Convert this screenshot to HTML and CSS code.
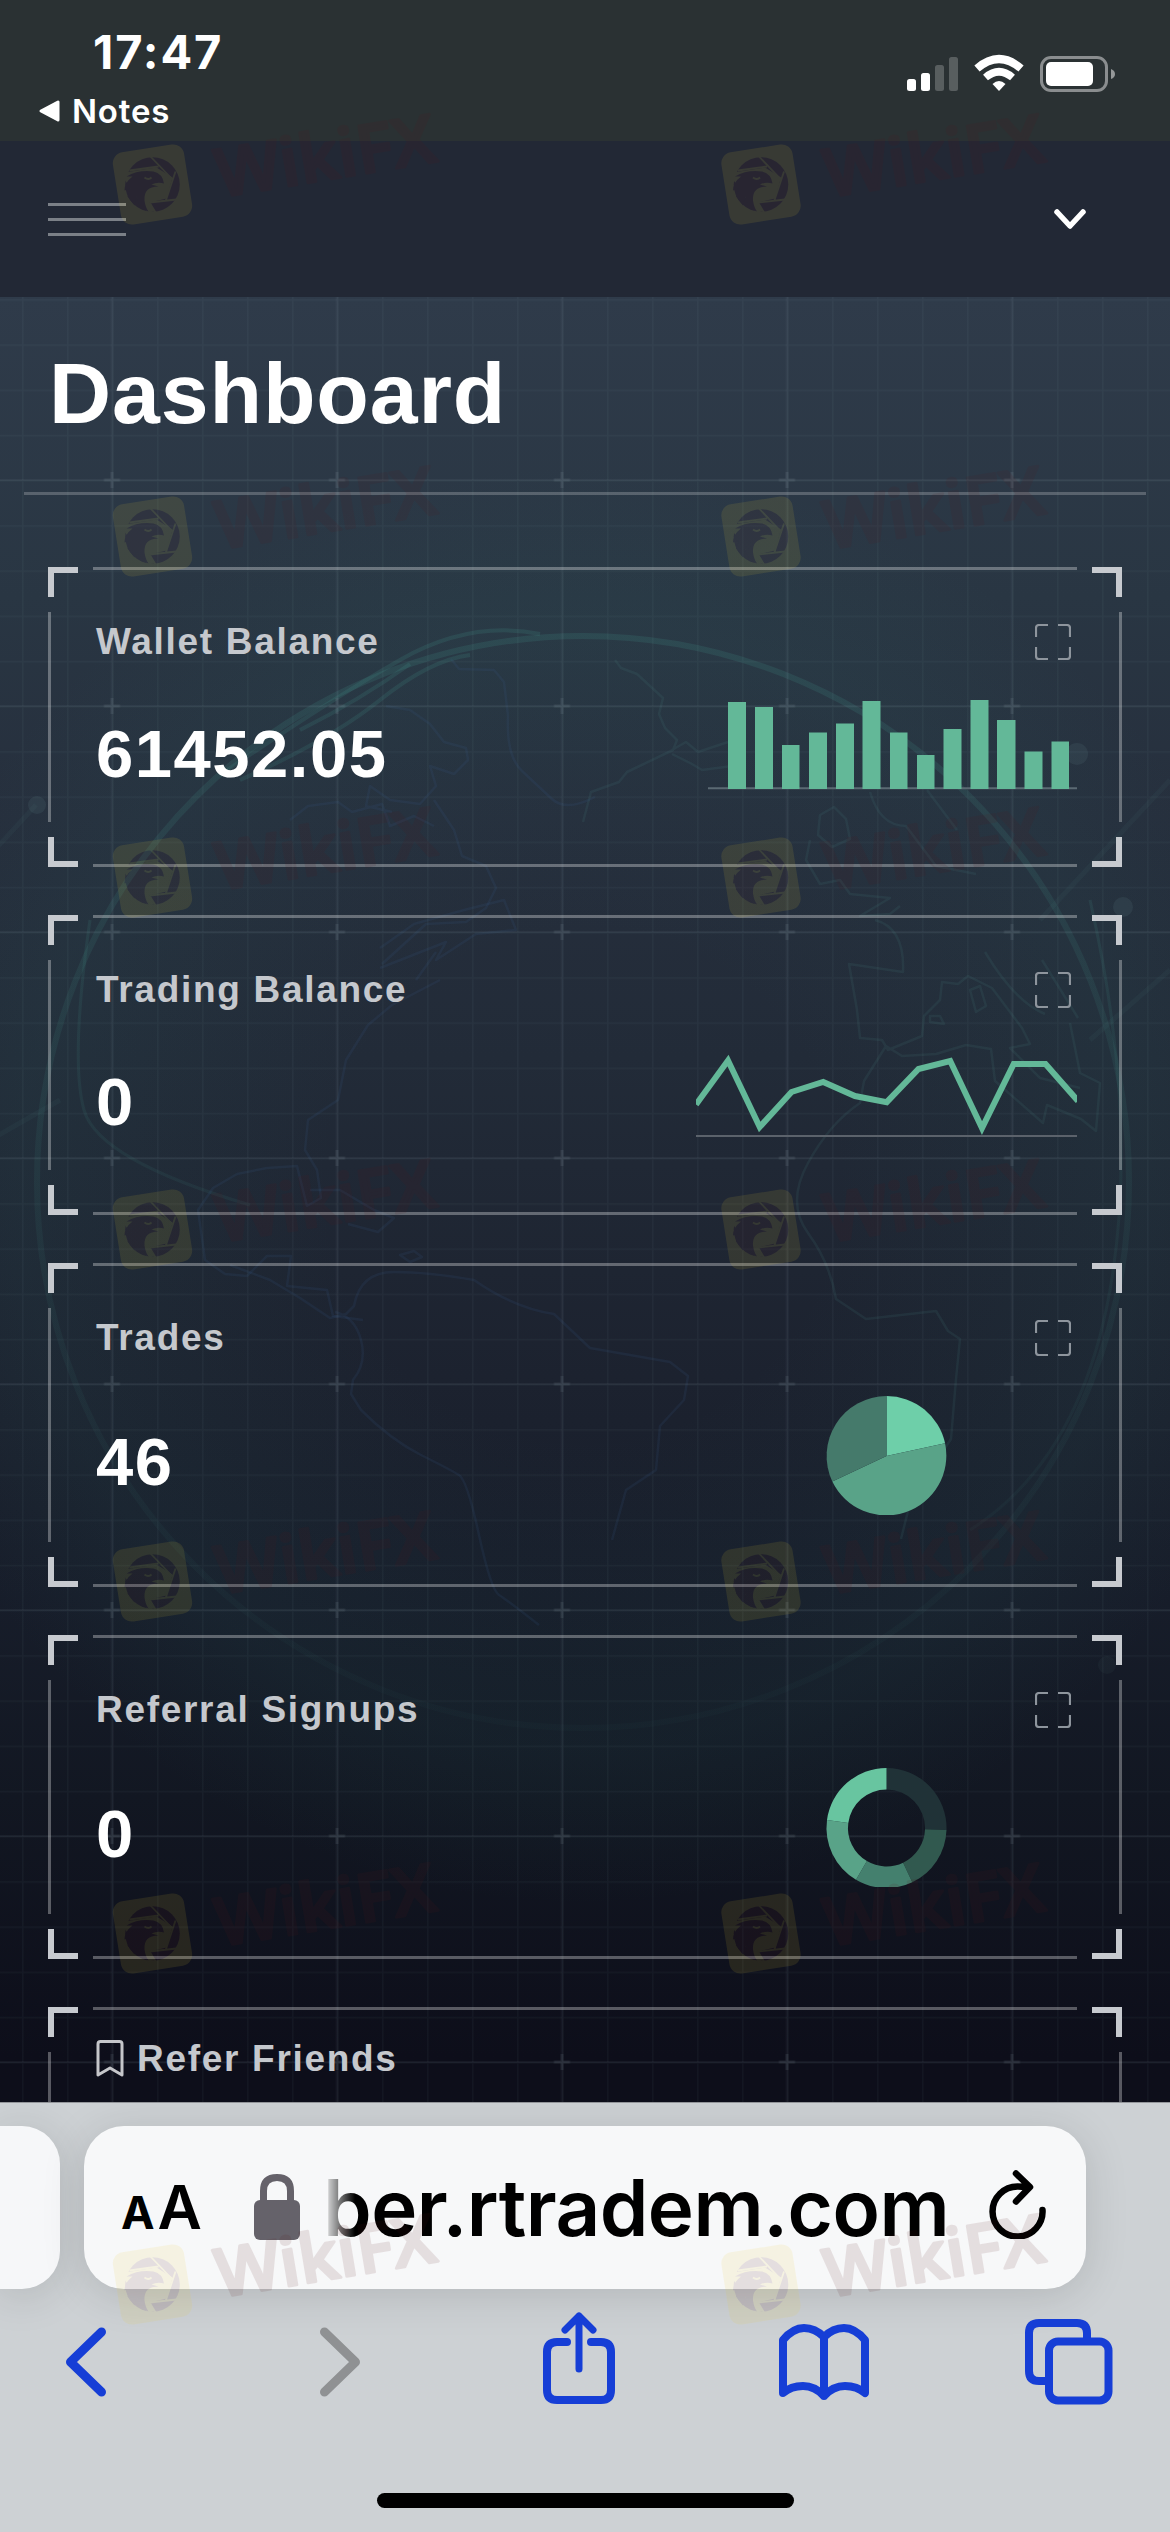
FILE: index.html
```html
<!DOCTYPE html>
<html lang="en">
<head>
<meta charset="utf-8">
<title>Dashboard</title>
<link rel="stylesheet" href="styles.css">
</head>
<body>

<div class="status">
  <div class="status-left">
    <div class="time">17:47</div>
    <div class="back-app"><svg width="22" height="24" viewBox="0 0 22 24"><path d="M3 12L20 3v18z" fill="#fff" stroke="#fff" stroke-width="3" stroke-linejoin="round"/></svg><span>Notes</span></div>
  </div>
  <svg class="status-icons" width="212" height="40" viewBox="905 54 212 40">
    <g fill="#fff">
      <rect x="907" y="79" width="9" height="12" rx="2.5"/>
      <rect x="921" y="73" width="9" height="18" rx="2.5"/>
      <rect x="935" y="65" width="9" height="26" rx="2.5" opacity=".22"/>
      <rect x="949" y="57" width="9" height="34" rx="2.5" opacity=".22"/>
      <path d="M999 91l-6.5-7q6.500-6 13 0z"/>
      <rect x="1046" y="62" width="47" height="24" rx="5"/>
      <path d="M1111 69q4 1.500 4 5t-4 5z" opacity=".5"/>
    </g>
    <g fill="none" stroke="#fff">
      <path d="M977 68.500Q999 49.500 1021 68.500" stroke-width="8"/>
      <path d="M985.500 77.500Q999 66 1012.500 77.500" stroke-width="7.500"/>
      <rect x="1041.500" y="57.500" width="65" height="33" rx="9.500" stroke-width="3" opacity=".45"/>
    </g>
  </svg>
</div>

<div class="navbar">
  <div class="menu"><i></i><i></i><i></i></div>
  <svg width="34" height="22" viewBox="0 0 34 22"><path d="M4 4l13 14L30 4" fill="none" stroke="#fff" stroke-width="5.500" stroke-linecap="round" stroke-linejoin="round"/></svg>
</div>

<div class="page">
  <svg class="backdrop" width="1170" height="1805" viewBox="0 297 1170 1805">
    <defs>
      <pattern id="minor" x="22" y="480" width="45" height="45.200" patternUnits="userSpaceOnUse">
        <path d="M.5 0v45.200M0 .5h45" stroke="#9fc0d0" stroke-opacity=".045" stroke-width="2" fill="none"/>
      </pattern>
      <pattern id="major" x="-.5" y="367" width="225" height="226" patternUnits="userSpaceOnUse">
        <path d="M112.500 0v226M0 113h225" stroke="#a9c0cc" stroke-opacity=".065" stroke-width="2" fill="none"/>
        <path d="M112.500 105v16M104.500 113h16" stroke="#a9c0cc" stroke-opacity=".11" stroke-width="3" fill="none"/>
      </pattern>
      <radialGradient id="glow" gradientUnits="userSpaceOnUse" cx="583" cy="1185" r="720">
        <stop offset=".35" stop-color="#2f6d6a" stop-opacity="0"/>
        <stop offset=".78" stop-color="#2f6d6a" stop-opacity=".09"/>
        <stop offset="1" stop-color="#2f6d6a" stop-opacity="0"/>
      </radialGradient>
      <linearGradient id="fade" gradientUnits="userSpaceOnUse" x1="0" y1="630" x2="0" y2="1740">
        <stop offset="0" stop-color="#3f8f86" stop-opacity=".19"/>
        <stop offset=".5" stop-color="#3f8f86" stop-opacity=".1"/>
        <stop offset="1" stop-color="#3f8f86" stop-opacity=".03"/>
      </linearGradient>
    </defs>
    <circle cx="583" cy="1185" r="720" fill="url(#glow)"/>
    <g fill="none" stroke="url(#fade)">
      <circle cx="583" cy="1182" r="546" stroke-width="6"/>
      <path d="M90 920Q70 1060 84 1110T250 1205M1090 900Q1140 1120 1110 1290T970 1530" stroke-width="3"/>
      <path d="M220 775Q330 700 400 660T540 634M240 780Q330 740 380 700T470 655M300 730q60-30 110-66" stroke-width="4"/>
    </g>
    <!-- coastlines -->
    <g fill="none" stroke="#3a5f8f" stroke-opacity=".14" stroke-width="2.500" stroke-linejoin="round">
      <path d="M451 659l8 10 35 1 10 12 4 34q-2 40 14 55t30 28 43-2"/>
      <path d="M386 706l24 4 20 14 14 18 22 6 2 12-14 14-24-8 6 20-16 18-30-4-20-14-4 20 26 6M290 820l18-14 30-4 14 10 30-8 8 22 24-10 20 10M434 800l20 30 8 26 24 10 10 22-10 20-20 14-40 2-44 40"/>
      <path d="M380 948l34-24 50-14 40-10 12 30-40 4-40 26 10-18-66 26M416 980l20-28M440 980l-48 25-24 20-22 35-8 40-30 20-3 30 12 20 4 28-14 8-10-40-30 2-30 6-24 14-15 22 7 50 20 14 22 2 20-20 24 0-4 30 40 4 6 26 30 4"/>
      <path d="M230 1265l40 15 30 18 30 20 16-4 8-8q6-34 40-34t80 8q40 28 80 34l36 34 80 14 18 14-4 24-24 26-4 44-30 20-14 50M335 1312q20 5 26 28t-8 40l-2 14 10 16q30 30 60 45t38 20 20 60 20 60 40 30"/>
      <path d="M310 1190h30l34 20 20 8-16 14-30-8M400 1255l14-4 8 6-12 5z"/>
    </g>
    <g fill="none" stroke="#46817f" stroke-opacity=".14" stroke-width="2.500" stroke-linejoin="round">
      <path d="M615 660l6 8 16 6 26 24-4 16 6 14 12 12-4 10-46 22-8 10-28 10-8 30M672 750l14-8 12 10 30-10M672 754l20 10 10 6 30-4M820 815l14-8 12 12 4 20-18 8-14-12zM810 840l-4 20 14 24 20-4 10 14 40 4-30 18 30-2 10-8"/>
      <path d="M870 792q10 34 36 34l30 40 40 8M927 790l30 40M875 920q30 8 28 52l-54-8 8 46 3 28 22 2 6 10 34-14 2-20 16-16 2-18 16 2 10-8 24 12 30 40 8 16-20 4 30 30 40 10M886 1046l16 10 34-2 30-9 25 4 4 32 48 42 4-18 34 14 15 12 4-48-20-10-10-50M886 1046l-22 35-4 22q-30 20-52 60t0 70 28 66l30 20 70-8 12 20 12 8-4 40-5 60-40 60-10 40"/>
      <path d="M985 952q30 50 60 62M1042 960l36 58M930 1016l10 0 4 8-14-2zM970 990l10-4 6 20-10 6z"/>
    </g>
    <g stroke="#5c8a8f" stroke-opacity=".07" stroke-width="5" fill="#5c7a80" fill-opacity=".16">
      <path d="M-10 855l46-50M1170 780l-130 140M1170 970l-80 70M-10 1140l70-40"/>
      <circle cx="37" cy="805" r="9" stroke="none"/>
      <circle cx="1077" cy="754" r="11" stroke="none"/>
      <circle cx="1123" cy="907" r="10" stroke="none"/>
      <circle cx="1107" cy="1665" r="9" stroke="none" opacity=".5"/>
    </g>
    <rect y="297" width="1170" height="1805" fill="url(#minor)"/>
    <rect y="297" width="1170" height="1805" fill="url(#major)"/>
  </svg>

  <h1>Dashboard</h1>
  <div class="rule"></div>

  <div class="cards">
    <div class="card">
      <div class="card-head"><span>Wallet Balance</span><svg class="expand" width="36" height="36" viewBox="0 0 36 36"><path d="M1 13V4q0-3 3-3h9M23 1h9q3 0 3 3v9M35 23v9q0 3-3 3h-9M13 35H4q-3 0-3-3v-9"/></svg></div>
      <div class="card-body">
        <div class="value">61452.05</div>
        <svg class="chart" width="381" height="90" viewBox="696 700 381 90">
          <path d="M708 788.200h369" stroke="#5b6a73" stroke-width="2"/>
          <path fill="#63b898" d="M728 702h18v87h-18zM755 707h18v82h-18zM782 745h17.500v44H782zM809 732.500h18V789h-18zM836 723.500h18V789h-18zM862.500 701h18v88h-18zM890 732.500h17.500V789H890zM917 755h17.500v34H917zM943.500 729h18v60h-18zM970.500 700h18v89h-18zM997 720h18.500v69H997zM1024.500 751.500h18V789h-18zM1051.500 741.500h17.500V789h-17.500z"/>
        </svg>
      </div>
    </div>

    <div class="card">
      <div class="card-head"><span>Trading Balance</span><svg class="expand" width="36" height="36" viewBox="0 0 36 36"><path d="M1 13V4q0-3 3-3h9M23 1h9q3 0 3 3v9M35 23v9q0 3-3 3h-9M13 35H4q-3 0-3-3v-9"/></svg></div>
      <div class="card-body">
        <div class="value">0</div>
        <svg class="chart" width="381" height="90" viewBox="696 1048 381 90">
          <path d="M696 1136h381" stroke="#5b626b" stroke-width="2"/>
          <path fill="none" stroke="#63b898" stroke-width="6" d="M696 1104.500l32-44 31.700 66.500 31.800-35 31.700-10 31.800 14 31.700 6.200 31.800-33.200 31.700-8 31.800 67 31.700-64h31.800l32.500 37"/>
        </svg>
      </div>
    </div>

    <div class="card tall">
      <div class="card-head"><span>Trades</span><svg class="expand" width="36" height="36" viewBox="0 0 36 36"><path d="M1 13V4q0-3 3-3h9M23 1h9q3 0 3 3v9M35 23v9q0 3-3 3h-9M13 35H4q-3 0-3-3v-9"/></svg></div>
      <div class="card-body">
        <div class="value">46</div>
        <svg class="chart" width="381" height="120" viewBox="-190.500 -61 381 120">
          <path d="M0 0V-60A60 60 0 0 1 58.600-12.700z" fill="#6ecfa9"/>
          <path d="M0 0L58.600-12.700A60 60 0 0 1-54.200 25.500z" fill="#59a388"/>
          <path d="M0 0L-54.200 25.500A60 60 0 0 1 0-60z" fill="#457a6b"/>
        </svg>
      </div>
    </div>

    <div class="card tall">
      <div class="card-head"><span>Referral Signups</span><svg class="expand" width="36" height="36" viewBox="0 0 36 36"><path d="M1 13V4q0-3 3-3h9M23 1h9q3 0 3 3v9M35 23v9q0 3-3 3h-9M13 35H4q-3 0-3-3v-9"/></svg></div>
      <div class="card-body">
        <div class="value">0</div>
        <svg class="chart" width="381" height="120" viewBox="-190.500 -61 381 120">
          <path d="M0-60A60 60 0 0 1 60 2L38.500 1.300A38.500 38.500 0 0 0 0-38.500z" fill="#203237"/>
          <path d="M60 2A60 60 0 0 1 25.800 54.200L16.600 34.700A38.500 38.500 0 0 0 38.500 1.300z" fill="#31594f"/>
          <path d="M25.800 54.200A60 60 0 0 1-30.500 51.700L-19.600 33.100A38.500 38.500 0 0 0 16.600 34.700z" fill="#44806e"/>
          <path d="M-30.500 51.700A60 60 0 0 1-59.500-8L-38.200-5.100A38.500 38.500 0 0 0-19.600 33.100z" fill="#59a388"/>
          <path d="M-59.500-8A60 60 0 0 1 0-60V-38.500A38.500 38.500 0 0 0-38.200-5.100z" fill="#68c5a0"/>
        </svg>
      </div>
    </div>

    <div class="card refer">
      <div class="card-head"><svg class="bookmark" width="28" height="38" viewBox="0 0 28 38"><path d="M2 4q0-2.500 2.500-2.500h19Q26 1.500 26 4v31l-12-7-12 7z"/></svg><span>Refer Friends</span></div>
    </div>
  </div>
</div>

<div class="browser">
  <div class="tabs">
    <div class="tab-prev"></div>
    <div class="address">
      <div class="text-size"><small>A</small><b>A</b></div>
      <svg class="lock" width="46" height="66" viewBox="0 0 46 66"><rect y="26" width="46" height="40" rx="6" fill="#65626a"/><path d="M9.500 28V17Q9.500 3.500 23 3.500T36.500 17v11" fill="none" stroke="#65626a" stroke-width="7"/></svg>
      <div class="url">ber.rtradem.com</div>
      <svg class="reload" width="58" height="70" viewBox="0 0 58 70"><path d="M38 18.500Q34 17.500 30 17.500A25 25 0 1 0 54.500 41M28 4.500l14 13.500-14 14.500" fill="none" stroke="#000" stroke-width="6.500" stroke-linecap="round" stroke-linejoin="round"/></svg>
    </div>
  </div>

  <div class="toolbar">
    <svg width="42" height="70" viewBox="0 0 42 70"><path d="M36.500 5L5.500 35l31 30" stroke="#163ed6"/></svg>
    <svg class="forward" width="42" height="70" viewBox="0 0 42 70"><path d="M5.500 5l31 30-31 30" stroke="#8f9193"/></svg>
    <svg class="thin share" width="74" height="92" viewBox="0 0 74 92"><path d="M25 30H15Q5 30 5 40v38q0 10 10 10h44q10 0 10-10V40q0-10-10-10H49" stroke-linecap="butt"/><path class="arrow" d="M37 57V4M23 18L37 4l14 14"/></svg>
    <svg class="thin book" width="90" height="76" viewBox="0 0 90 76"><path d="M45 72V13Q36 4 25 4T4 16v53q8-7 20-7t21 10q9-10 21-10t20 7V16Q76 4 65 4T45 13"/></svg>
    <svg class="thin pages" width="88" height="86" viewBox="0 0 88 86"><path d="M21 62h-7q-10 0-10-10V14Q4 4 14 4h38q10 0 10 10v8"/><rect x="24" y="22.500" width="59.500" height="59" rx="9"/></svg>
  </div>

  <div class="home"></div>
</div>

<svg class="watermark" width="1170" height="2532" viewBox="0 0 1170 2532">
  <defs>
    <g id="mark" opacity=".11">
      <rect x="-36" y="-36.500" width="72" height="73" rx="11" fill="#e9cb34" transform="rotate(-9)"/>
      <circle r="27.300" fill="#57161a"/>
      <path d="M-28-12L4-17 20-7 14 14-3 18 2 27-5 28-28-5z" fill="#e9cb34"/>
      <path d="M-2-28L20-5M23-13L13 17M24 15L-3 18M-23-14L6-18M-3 18L3 28" stroke="#e9cb34" stroke-width="1.800"/>
      <path d="M-26-8Q-14-15 1-13 10-11 11.500-1 5-3-1 0L6 2Q-9 2-8 16-7 23-4 27L-12 24-16 12-18 21-25 12-22 4-28 6Q-28-2-20-8z" fill="#57161a"/>
      <path d="M-8-7q4 3 7 0" fill="none" stroke="#e9cb34" stroke-width="1.800"/>
      <text class="brand" transform="translate(67 13) rotate(-9.400)" textLength="222" lengthAdjust="spacingAndGlyphs">WikiFX</text>
    </g>
    <g id="pair"><use href="#mark" x="152.500"/><use href="#mark" x="761"/></g>
  </defs>
  <use href="#pair" y="184.500"/>
  <use href="#pair" y="536.500"/>
  <use href="#pair" y="877.500"/>
  <use href="#pair" y="1229.500"/>
  <use href="#pair" y="1581.500"/>
  <use href="#pair" y="1933.500"/>
  <use href="#pair" y="2284.500"/>
</svg>

</body>
</html>
```

FILE: styles.css
```css
* {
	box-sizing: border-box;
}
body {
	margin: 0;
	width: 1170px;
	height: 2532px;
	position: relative;
	overflow: hidden;
	display: flex;
	flex-direction: column;
	font-family: "Liberation Sans", Arial, sans-serif;
	color: #fff;
	background: #0e0f1b;
}
svg {
	display: block;
	flex: none;
}

/* phone status bar */
.status {
	height: 141px;
	flex: none;
	background: #2a3133;
	display: flex;
	justify-content: space-between;
	padding: 24px 53px 0 38px;
	font-family: Inter, sans-serif;
}
.time {
	font-size: 47px;
	line-height: 56px;
	font-weight: 700;
	margin-left: 55px;
	letter-spacing: 1.9px;
}
.back-app {
	display: flex;
	align-items: center;
	gap: 12px;
	font-size: 33px;
	line-height: 40px;
	font-weight: 600;
	margin-top: 11px;
	letter-spacing: 0.8px;
}
.status-icons {
	margin-top: 30px;
}

.navbar {
	height: 156px;
	flex: none;
	background: #222835;
	display: flex;
	align-items: center;
	justify-content: space-between;
	padding: 0 83px 0 48px;
}
.menu {
	display: flex;
	flex-direction: column;
	gap: 12px;
}
.menu i {
	width: 78px;
	height: 3px;
	background: #7b8087;
}

.page {
	height: 1805px;
	flex: none;
	position: relative;
	overflow: hidden;
	background: linear-gradient(#2f3b4a 0, #293643 300px, #262f3d 520px, #222b38 760px, #1c222f 1080px, #171d2a 1300px, #121722 1500px, #0d0e1a 1760px);
}
.backdrop {
	position: absolute;
	left: 0;
	top: 0;
}
h1 {
	margin: 0;
	padding: 47px 0 0 49px;
	font-size: 86px;
	line-height: 98px;
	letter-spacing: 0.9px;
	position: relative;
}
.rule {
	height: 3px;
	margin: 50px 24px 0;
	background: rgba(255,255,255,.22);
}
.cards {
	position: relative;
	padding: 72px 48px 0;
	display: flex;
	flex-direction: column;
	gap: 48px;
}

/* frame: thin broken lines and thick corners */
.card {
	--l: rgba(255,255,255,.31);
	--c: #c7cacf;
	height: 300px;
	flex: none;
	padding: 57px 45px 0 48px;
	background:
		linear-gradient(var(--l), var(--l)) 45px 0 / calc(100% - 90px) 3px,
		linear-gradient(var(--l), var(--l)) 45px 100% / calc(100% - 90px) 3px,
		linear-gradient(var(--l), var(--l)) 0 45px / 3px calc(100% - 90px),
		linear-gradient(var(--l), var(--l)) 100% 45px / 3px calc(100% - 90px),
		linear-gradient(var(--c), var(--c)) 0 0 / 30px 6px,
		linear-gradient(var(--c), var(--c)) 0 0 / 6px 30px,
		linear-gradient(var(--c), var(--c)) 100% 0 / 30px 6px,
		linear-gradient(var(--c), var(--c)) 100% 0 / 6px 30px,
		linear-gradient(var(--c), var(--c)) 0 100% / 30px 6px,
		linear-gradient(var(--c), var(--c)) 0 100% / 6px 30px,
		linear-gradient(var(--c), var(--c)) 100% 100% / 30px 6px,
		linear-gradient(var(--c), var(--c)) 100% 100% / 6px 30px;
	background-repeat: no-repeat;
}
.card.tall {
	height: 324px;
}
.card.refer {
	padding-top: 34px;
}
.card-head {
	display: flex;
	justify-content: space-between;
	font-size: 37px;
	line-height: 36px;
	font-weight: bold;
	letter-spacing: 1.7px;
	color: #c5c8cd;
}
.expand {
	margin-right: 6px;
}
.expand path {
	fill: none;
	stroke: #8e959d;
	stroke-width: 2.2;
}
.refer .card-head {
	justify-content: flex-start;
	gap: 13px;
}
.bookmark {
	margin-top: -1px;
}
.bookmark path {
	fill: none;
	stroke: #c5c6ca;
	stroke-width: 3;
	stroke-linejoin: round;
}
.card-body {
	display: flex;
	justify-content: space-between;
	align-items: center;
	margin-top: 40px;
	height: 90px;
}
.tall .card-body {
	margin-top: 39px;
	height: 120px;
}
.value {
	font-size: 67px;
	line-height: 76px;
	font-weight: bold;
	letter-spacing: 1.5px;
	padding-top: 17px;
}
.tall .value {
	padding-top: 14px;
}

/* browser bottom bar */
.browser {
	height: 430px;
	flex: none;
	background: #cdd1d4;
	border-top: 1px solid #94979b;
	font-family: Inter, sans-serif;
	color: #000;
}
.tabs {
	display: flex;
	gap: 24px;
	padding-top: 23px;
	height: 205px;
}
.tab-prev {
	width: 60px;
	height: 163px;
	flex: none;
	background: #f6f7f9;
	border-radius: 0 38px 38px 0;
	box-shadow: 0 6px 44px rgba(0,0,0,.13);
}
.address {
	width: 1002px;
	height: 163px;
	flex: none;
	display: flex;
	background: #f7f8f9;
	border-radius: 40px;
	box-shadow: 0 6px 44px rgba(0,0,0,.13);
}
.text-size {
	margin-left: 37px;
	width: 79px;
	display: flex;
	align-items: baseline;
	line-height: 163px;
	gap: 3px;
}
.text-size small {
	font-size: 45px;
	font-weight: 700;
}
.text-size b {
	font-size: 61px;
	font-weight: 600;
}
.lock {
	margin: 48px 0 0 54px;
}
.url {
	margin-left: 23px;
	width: 636px;
	font-size: 78px;
	line-height: 163px;
	font-weight: 600;
	white-space: nowrap;
	letter-spacing: -0.5px;
	-webkit-mask-image: linear-gradient(90deg, transparent 0, #000 32px);
	mask-image: linear-gradient(90deg, transparent 0, #000 32px);
}
.reload {
	margin-top: 43px;
	margin-left: 29px;
}
.toolbar {
	height: 100px;
	display: flex;
	align-items: center;
	padding: 7px 0 0 65px;
}
.forward {
	margin-left: 212px;
}
.share {
	margin: 0 0 7px 181px;
}
.book {
	margin-left: 163px;
}
.pages {
	margin-left: 156px;
}
.toolbar path {
	fill: none;
	stroke-width: 9;
	stroke-linecap: round;
	stroke-linejoin: round;
}
.toolbar .thin path,
.toolbar .thin rect {
	fill: none;
	stroke: #163ed6;
	stroke-width: 8;
}
.toolbar .thin .arrow {
	stroke-width: 7;
}
.home {
	width: 417px;
	height: 15px;
	border-radius: 8px;
	background: #000;
	margin: 85px 0 0 377px;
}

.watermark {
	position: absolute;
	left: 0;
	top: 0;
	pointer-events: none;
}
.brand {
	font-family: "Open Sans", sans-serif;
	font-size: 67px;
	font-weight: 600;
	fill: #57161a;
	stroke: #57161a;
	stroke-width: 3;
	stroke-linejoin: round;
}
```
